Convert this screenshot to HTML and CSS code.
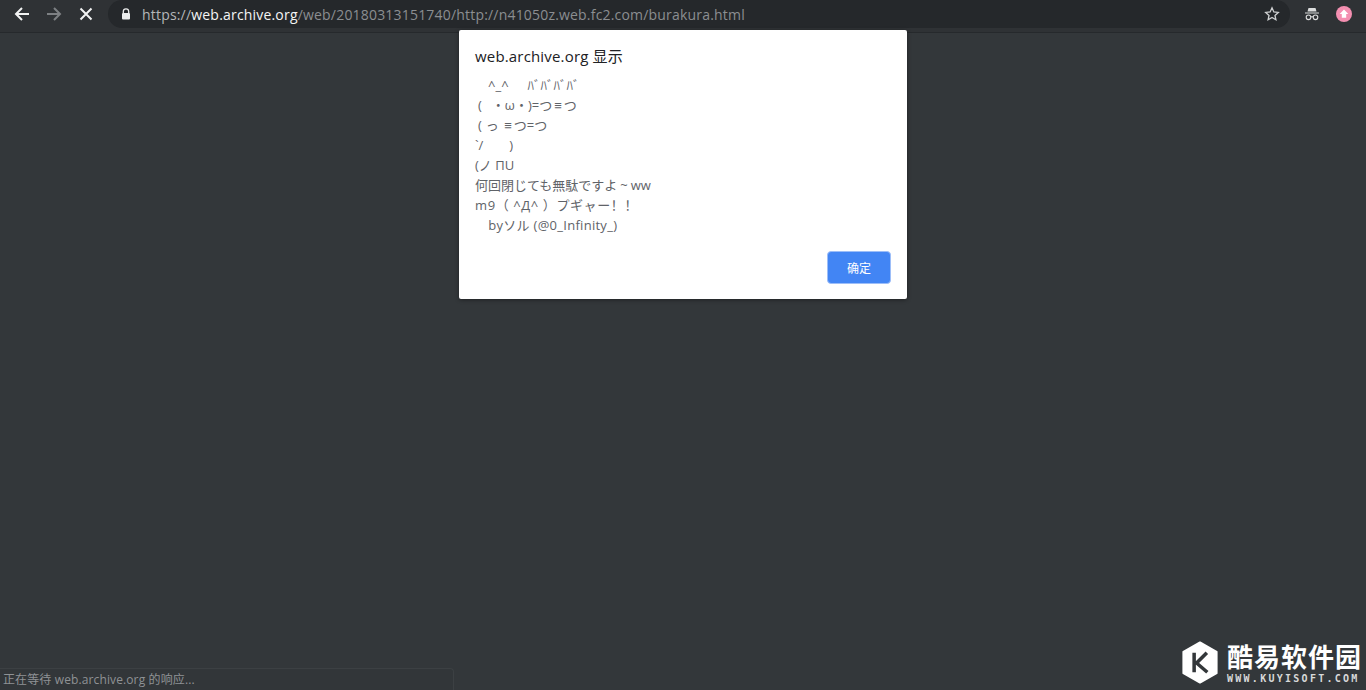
FILE: index.html
```html
<!DOCTYPE html>
<html lang="zh">
<head>
<meta charset="utf-8">
<title>web.archive.org</title>
<link rel="stylesheet" href="styles.css">
</head>
<body>
<header class="toolbar">
  <nav class="nav">
    <svg class="nav-icon" viewBox="0 0 16 16"><path d="M15 8H2.500M8 2 2 8l6 6" class="stroke-white"/></svg>
    <svg class="nav-icon" viewBox="0 0 16 16"><path d="M1 8h12.500M8 2l6 6-6 6" class="stroke-dim"/></svg>
    <svg class="nav-icon" viewBox="0 0 16 16"><path d="M2.500 2.500l11 11M13.500 2.500l-11 11" class="stroke-white"/></svg>
  </nav>
  <div class="omnibox">
    <svg class="lock" viewBox="0 0 10 12"><path d="M2.300 5V3.500a2.700 2.700 0 0 1 5.400 0V5" class="lock-shackle"/><rect x="1" y="5" width="8" height="6.500" rx="1" class="lock-body"/></svg>
    <span class="url"><span class="url-scheme">https://</span><span class="url-host">web.archive.org</span><span class="url-path">/web/20180313151740/http://n41050z.web.fc2.com/burakura.html</span></span>
    <svg class="star" viewBox="0 0 16 16"><path d="M8 1.800l1.850 4.100 4.450.5-3.320 3 .92 4.400L8 11.550 4.100 13.800l.92-4.400-3.320-3 4.450-.5z"/></svg>
  </div>
  <div class="actions">
    <svg class="incognito" viewBox="0 0 16 16"><path d="M4.500 2h7l1 3.600h-9zM1 6.400h14v1.100H1z" class="fill-light"/><circle cx="4.500" cy="11.300" r="2.300" class="glass"/><circle cx="11.500" cy="11.300" r="2.300" class="glass"/><path d="M6.800 10.800h2.400" class="glass"/></svg>
    <svg class="avatar" viewBox="0 0 16 16"><circle cx="8" cy="8" r="8" fill="#f48fb1"/><path d="M8 3.500 12.300 8H10.200v3.800H5.800V8H3.700z" fill="#fff"/></svg>
  </div>
</header>
<main class="page"></main>

<section class="dialog">
  <h1 class="dialog-title">web.archive.org 显示</h1>
  <div class="dialog-message"><div class="msg-line">　^_^　<span class="kana">ﾊﾞﾊﾞﾊﾞﾊﾞ</span></div><div class="msg-line"><span class="paren paren-wide">(</span>・ω・)=つ<span class="triple">≡</span>つ</div><div class="msg-line"><span class="paren paren-narrow">(</span>っ <span class="triple">≡</span>つ=つ</div><div class="msg-line">`/　　)</div><div class="msg-line">(ノ ΠU</div><div class="msg-line">何回閉じても無駄ですよ<span class="tilde">~</span>ww</div><div class="msg-line wider">m9（ ^Д^ ）プギャー！！</div><div class="msg-line wide">　byソル (@0_Infinity_)</div></div>
  <div class="dialog-actions"><button class="dialog-button">确定</button></div>
</section>

<div class="status">正在等待 web.archive.org 的响应...</div>

<div class="watermark">
  <svg class="wm-logo" viewBox="0 0 38 44"><path d="M19 1.500 36 11v22L19 42.500 2 33V11z" fill="#fff" stroke="#fff" stroke-width="2" stroke-linejoin="round"/><path d="M13 12v20M26 12 15.500 22.500 26.500 32" fill="none" stroke="#33373a" stroke-width="3.600"/></svg>
  <div class="wm-text">
    <div class="wm-name">酷易软件园</div>
    <div class="wm-url">WWW.KUYISOFT.COM</div>
  </div>
</div>
</body>
</html>
```
FILE: styles.css
```css
* { box-sizing: border-box; }
html, body { height: 100%; }
body {
  margin: 0;
  display: flex;
  flex-direction: column;
  overflow: hidden;
  background: #33373a;
  font-family: "Open Sans", "Noto Sans CJK JP", sans-serif;
}
.toolbar {
  height: 33px;
  flex: none;
  display: flex;
  align-items: flex-start;
  background: #2f3235;
  border-bottom: 1px solid #26292c;
}
.nav {
  display: flex;
  align-items: center;
  gap: 16px;
  height: 28px;
  padding-left: 14px;
  width: 108px;
}
.nav-icon { width: 16px; height: 16px; flex: none; }
.stroke-white, .stroke-dim { fill: none; stroke-width: 2; }
.stroke-white { stroke: #f2f3f3; }
.stroke-dim { stroke: #7d8083; }
.omnibox {
  width: 1182px;
  height: 28px;
  display: flex;
  align-items: center;
  background: #25282b;
  border-radius: 14px;
  padding: 0 10px 0 13px;
}
.lock { width: 10px; height: 12px; flex: none; margin-right: 11px; }
.lock-shackle { fill: none; stroke: #eceded; stroke-width: 1.300; }
.lock-body { fill: #eceded; }
.url {
  flex: 1;
  font-size: 14px;
  white-space: nowrap;
  letter-spacing: 0.19px;
}
.url-scheme { color: #b4b6b8; }
.url-host { color: #f4f5f5; }
.url-path { color: #8b8e91; }
.star { width: 16px; height: 16px; flex: none; fill: none; stroke: #d0d2d3; stroke-width: 1.300; }
.actions {
  display: flex;
  align-items: center;
  gap: 16px;
  height: 28px;
  padding-left: 14px;
}
.incognito { width: 16px; height: 16px; }
.fill-light { fill: #dcdddd; }
.glass { fill: none; stroke: #dcdddd; stroke-width: 1.100; }
.avatar { width: 16px; height: 16px; }
.page { flex: 1; background: #33373a; }
.dialog {
  position: absolute;
  left: 459px;
  top: 30px;
  width: 448px;
  height: 269px;
  background: #fff;
  border-radius: 2px;
  box-shadow: 0 1px 4px rgba(0, 0, 0, 0.4);
  padding: 15px 16px 15px;
  display: flex;
  flex-direction: column;
}
.dialog-title {
  margin: 0;
  font-size: 15px;
  font-weight: 400;
  line-height: 22px;
  letter-spacing: 0.17px;
  color: #202124;
}
.dialog-message {
  margin-top: 8px;
  font-size: 13px;
  line-height: 20px;
  color: #5f6368;
  white-space: pre;
}
.msg-line { height: 20px; }
.kana { margin-left: 6px; }
.paren { margin-left: 3px; }
.paren-wide { margin-right: 10px; }
.paren-narrow { margin-right: 4px; }
.triple {
  font-family: "Liberation Sans", sans-serif;
  line-height: 1;
  margin: 0 2px;
}
.tilde { padding: 0 3px; }
.wide { letter-spacing: 0.28px; }
.wider { letter-spacing: 0.6px; }
.dialog-actions {
  margin-top: auto;
  display: flex;
  justify-content: flex-end;
}
.dialog-button {
  width: 64px;
  height: 33px;
  border: 1px solid #9dbef8;
  border-radius: 4px;
  background: #4285f4;
  color: #fff;
  font: 12px "Noto Sans CJK SC", sans-serif;
  padding: 0;
}
.status {
  position: absolute;
  left: 0;
  bottom: 0;
  width: 454px;
  height: 22px;
  padding: 2px 0 0 3px;
  border: 1px solid #3c4043;
  border-width: 1px 1px 0 0;
  border-top-right-radius: 4px;
  background: #323639;
  color: #8f9295;
  letter-spacing: 0.12px;
  font-size: 12px;
  line-height: 17px;
  font-family: "Open Sans", "Noto Sans CJK SC", sans-serif;
}
.watermark {
  position: absolute;
  right: 4px;
  bottom: 6px;
  display: flex;
  align-items: center;
  gap: 8px;
  color: #fff;
}
.wm-logo { width: 38px; height: 43px; flex: none; }
.wm-name {
  font: 700 26px/30px "Noto Sans CJK SC", sans-serif;
  letter-spacing: 1px;
  white-space: nowrap;
}
.wm-url {
  font: 700 10px/11px "DejaVu Sans Mono", monospace;
  letter-spacing: 2.270px;
  margin-top: 2px;
  color: #d8d9d9;
  white-space: nowrap;
}
```
